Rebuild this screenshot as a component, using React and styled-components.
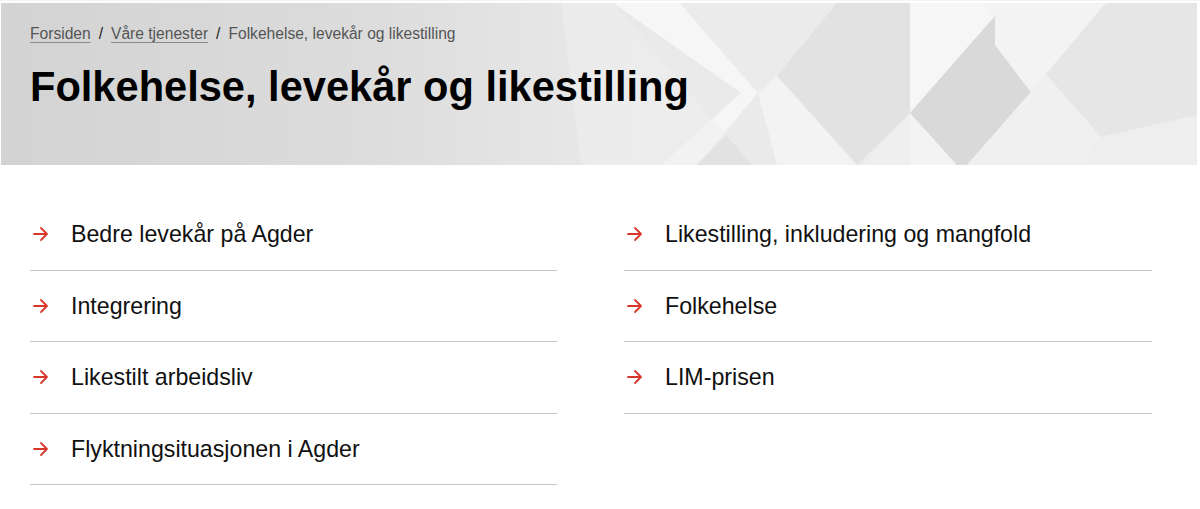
import React from 'react'
import styled, { createGlobalStyle } from 'styled-components'

const GlobalStyle = createGlobalStyle`
  html, body {
    margin: 0;
    padding: 0;
    background: #ffffff;
  }
  body {
    font-family: 'Liberation Sans', Arial, Helvetica, sans-serif;
    color: #000000;
  }
`

const Page = styled.div`
  padding: 2px 3px 0 1px;
  border-top: 1px solid #f4f4f4;
  box-sizing: border-box;
  min-height: 509px;
`

const Hero = styled.header`
  position: relative;
  height: 162px;
  overflow: hidden;
  background: linear-gradient(90deg, #d3d3d3 0%, #dcdcdc 30%, #e9e9e9 52%, #eeeeee 100%);
`

const Pattern = styled.svg`
  position: absolute;
  top: 0;
  left: 0;
  width: 1196px;
  height: 162px;
`

const HeroInner = styled.div`
  position: relative;
  padding: 21px 29px 0;
`

const Crumbs = styled.nav`
  display: flex;
  align-items: center;
  gap: 8px;
  font-size: 15.6px;
  line-height: 20px;
  color: #555555;

  a {
    color: #555555;
    text-decoration: underline;
    text-underline-offset: 3px;
    text-decoration-color: #8a8a8a;
  }
`

const Sep = styled.span`
  color: #222222;
`

const Title = styled.h1`
  margin: 19px 0 0;
  font-size: 41.6px;
  line-height: 48px;
  font-weight: 700;
  letter-spacing: 0;
`

const Lists = styled.div`
  display: grid;
  grid-template-columns: 527px 528px;
  column-gap: 67px;
  padding: 34px 0 0 29px;
`

const LinkList = styled.ul`
  list-style: none;
  margin: 0;
  padding: 0;
`

const Item = styled.li`
  display: flex;
  align-items: center;
  gap: 22px;
  padding: 21.25px 0;
  border-bottom: 1px solid #c4c4c4;
  font-size: 23.2px;
  line-height: 28px;
  color: #111111;
`

const Arrow = styled.svg`
  flex: none;
  width: 18px;
  height: 18px;
  margin-left: 1px;
`

function ArrowIcon() {
  return (
    <Arrow viewBox="0 0 18 18" fill="none" stroke="#d6382c" strokeWidth="1.8" strokeLinecap="round" strokeLinejoin="round">
      <path d="M3 9h13M10 3l6 6-6 6" />
    </Arrow>
  )
}

const left = [
  'Bedre levekår på Agder',
  'Integrering',
  'Likestilt arbeidsliv',
  'Flyktningsituasjonen i Agder',
]

const right = ['Likestilling, inkludering og mangfold', 'Folkehelse', 'LIM-prisen']

function HeroPattern() {
  return (
    <Pattern viewBox="0 0 1196 162" preserveAspectRatio="none">
      <polygon points="612,0 679,0 757,90 696,162 660,162 740,90" fill="#f6f6f6" />
      <polygon points="612,0 725,132 696,162 640,162 580,162 560,0" fill="#efefef" opacity="0.55" />
      <polygon points="725,132 751,162 696,162" fill="#e2e2e2" />
      <polygon points="679,0 836,0 776,73 757,90" fill="#ebebeb" />
      <polygon points="836,0 909,0 909,110 856,162 776,73" fill="#e2e2e2" />
      <polygon points="776,73 856,162 776,162 757,90" fill="#f3f3f3" />
      <polygon points="909,110 862,162 909,162" fill="#efefef" />
      <polygon points="909,0 983,0 994,13 909,110" fill="#f6f6f6" />
      <polygon points="909,110 956,162 909,162" fill="#f3f3f3" />
      <polygon points="994,13 994,42 1030,89 966,162 956,162 909,110" fill="#d9d9d9" />
      <polygon points="983,0 1105,0 1045,71 1030,89 994,42 994,13" fill="#f3f3f3" />
      <polygon points="1030,89 1045,71 1100,134 1080,162 966,162" fill="#f0f0f0" />
      <polygon points="1105,0 1196,0 1196,112 1100,134 1045,71" fill="#e6e6e6" />
      <polygon points="1100,134 1196,112 1196,162 1080,162" fill="#eeeeee" />
    </Pattern>
  )
}

export default function App() {
  return (
    <Page>
      <GlobalStyle />
      <Hero>
        <HeroPattern />
        <HeroInner>
          <Crumbs>
            <a href="#">Forsiden</a>
            <Sep>/</Sep>
            <a href="#">Våre tjenester</a>
            <Sep>/</Sep>
            <span>Folkehelse, levekår og likestilling</span>
          </Crumbs>
          <Title>Folkehelse, levekår og likestilling</Title>
        </HeroInner>
      </Hero>
      <Lists>
        <LinkList>
          {left.map((t) => (
            <Item key={t}>
              <ArrowIcon />
              {t}
            </Item>
          ))}
        </LinkList>
        <LinkList>
          {right.map((t) => (
            <Item key={t}>
              <ArrowIcon />
              {t}
            </Item>
          ))}
        </LinkList>
      </Lists>
    </Page>
  )
}
